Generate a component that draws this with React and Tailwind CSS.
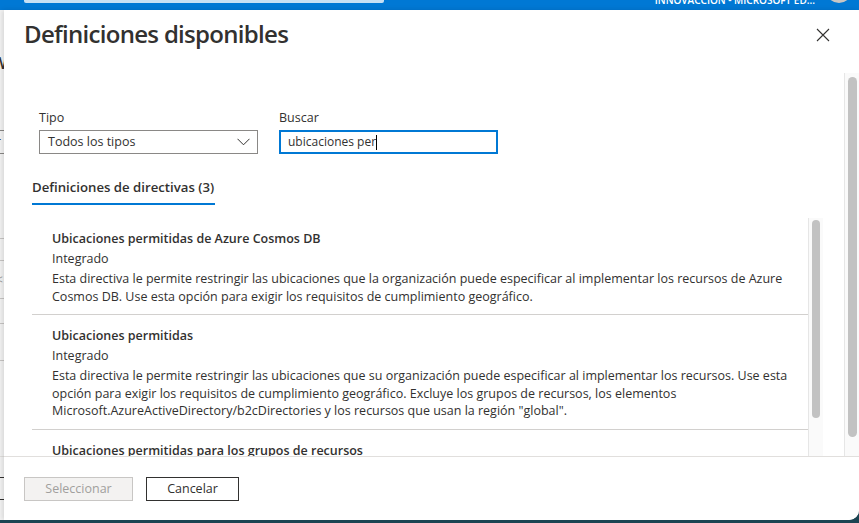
import React from "react";

const FONT = { fontFamily: '"Open Sans", "Noto Sans", sans-serif' };

const items = [
  {
    title: "Ubicaciones permitidas de Azure Cosmos DB",
    lines: [
      "Esta directiva le permite restringir las ubicaciones que la organización puede especificar al implementar los recursos de Azure",
      "Cosmos DB. Use esta opción para exigir los requisitos de cumplimiento geográfico.",
    ],
  },
  {
    title: "Ubicaciones permitidas",
    lines: [
      "Esta directiva le permite restringir las ubicaciones que su organización puede especificar al implementar los recursos. Use esta",
      "opción para exigir los requisitos de cumplimiento geográfico. Excluye los grupos de recursos, los elementos",
      'Microsoft.AzureActiveDirectory/b2cDirectories y los recursos que usan la región "global".',
    ],
  },
  {
    title: "Ubicaciones permitidas para los grupos de recursos",
    lines: [
      "Esta directiva le permite restringir las ubicaciones en las que la organización puede crear grupos de recursos. Use esta opción",
      "para exigir los requisitos de cumplimiento geográfico.",
    ],
  },
];

function Scrollbar({ thumbTop, thumbHeight, thumbWidth }) {
  return (
    <div className="w-[15px] shrink-0 border-l border-[#e6e6e6] bg-[#fafafa] flex justify-center">
      <div className="flex flex-col">
        <div style={{ height: thumbTop }} />
        <div
          className="rounded-full bg-[#c2c2c2]"
          style={{ height: thumbHeight, width: thumbWidth }}
        />
      </div>
    </div>
  );
}

export default function App() {
  return (
    <div className="w-[859px] h-[523px] flex flex-col overflow-hidden bg-[#1b4452]" style={FONT}>
      <div className="h-[520px] flex flex-col bg-white rounded-br-[10px] overflow-hidden">
        {/* top bar */}
        <div className="h-[10px] shrink-0 bg-[#0078d4] flex items-start overflow-hidden">
          <div className="ml-[24px] w-[360px] h-[3px] bg-[#c7e0f4] rounded-b-[2px]" />
          <div className="ml-auto -mt-[6px] text-[10px] leading-[12px] font-semibold text-white whitespace-nowrap">
            INNOVACCIÓN - MICROSOFT ED...
          </div>
          <div className="ml-[11px] mr-[7px] -mt-[23px] w-[26px] h-[26px] rounded-full bg-[#c8c6c4]" />
        </div>

        <div className="flex flex-1 min-h-0">
          {/* background page strip */}
          <div className="w-[4px] shrink-0 bg-[#f4f4f4] flex flex-col overflow-hidden text-[#323130]">
            <div className="h-[45px]" />
            <div className="text-[16px] leading-[16px] font-semibold -ml-[8px]">W</div>
            <div className="h-[59px]" />
            <div className="h-px bg-[#8a8886]" />
            <div className="text-[12px] leading-[22px] -ml-[4px]">r</div>
            <div className="h-px bg-[#8a8886]" />
            <div className="h-[84px]" />
            <div className="h-px bg-[#c8c6c4]" />
            <div className="h-[21px]" />
            <div className="h-px bg-[#c8c6c4]" />
            <div className="text-[12px] leading-[37px] -ml-[4px] text-[#a19f9d]">&lt;</div>
            <div className="h-px bg-[#c8c6c4]" />
            <div className="h-[24px]" />
            <div className="h-px bg-[#c8c6c4]" />
            <div className="h-[36px]" />
            <div className="h-px bg-[#c8c6c4]" />
            <div className="h-[95px]" />
            <div className="h-px bg-[#e1dfdd]" />
            <div className="h-[20px]" />
            <div className="h-[23px] border-y border-[#323130] text-[12px] leading-[21px] -ml-[4px]">(</div>
          </div>

          {/* panel */}
          <div className="flex-1 flex flex-col bg-white shadow-[-2px_0_5px_rgba(0,0,0,0.12)] text-[#323130]">
            {/* header */}
            <div className="h-[63px] shrink-0 flex items-start justify-between pl-[20px] pr-[29px] pt-[8px]">
              <h1 className="text-[24px] leading-[32px] font-semibold tracking-[-0.7px] text-[#323130]">
                Definiciones disponibles
              </h1>
              <svg width="14" height="14" viewBox="0 0 14 14" className="mt-[10px]">
                <path d="M1 1 L13 13 M13 1 L1 13" stroke="#323130" strokeWidth="1.1" fill="none" />
              </svg>
            </div>

            {/* body */}
            <div className="flex-1 min-h-0 flex">
              <div className="flex-1 min-w-0 flex flex-col pr-[21px]">
                {/* filters */}
                <div className="pt-[36px] pl-[35px] flex gap-[21px]">
                  <div className="w-[219px] flex flex-col">
                    <div className="text-[12.5px] leading-[18px]">Tipo</div>
                    <div className="mt-[3px] h-[24px] border border-[#8a8886] flex items-center justify-between pl-[8px] pr-[7px]">
                      <span className="text-[12.5px] leading-[16px]">Todos los tipos</span>
                      <svg width="13" height="8" viewBox="0 0 13 8">
                        <path d="M0.5 0.8 L6.5 6.8 L12.5 0.8" stroke="#323130" strokeWidth="1" fill="none" />
                      </svg>
                    </div>
                  </div>
                  <div className="w-[219px] flex flex-col">
                    <div className="text-[12.5px] leading-[18px]">Buscar</div>
                    <div className="mt-[3px] h-[24px] border-2 border-[#0078d4] flex items-center pl-[7px]">
                      <span className="text-[12px] leading-[16px]">ubicaciones per</span>
                      <span className="w-px h-[15px] bg-[#000]" />
                    </div>
                  </div>
                </div>

                {/* tab */}
                <div className="mt-[24px] pl-[28px] flex">
                  <div className="border-b-2 border-[#0078d4] pb-[7px] text-[13.2px] leading-[18px] font-semibold pr-[1px]">
                    Definiciones de directivas (3)
                  </div>
                </div>

                {/* list */}
                <div className="mt-[13px] ml-[28px] flex-1 min-h-0 flex">
                  <div className="flex-1 min-w-0 overflow-hidden">
                    {items.map((it, i) => (
                      <div key={i} className="border-b border-[#d2d0ce] pt-[12px] pb-[9px] pl-[20px]">
                        <div className="text-[12.5px] leading-[18px] font-semibold whitespace-nowrap">{it.title}</div>
                        <div className="mt-[2px] text-[12.5px] leading-[18px]">Integrado</div>
                        <div className="mt-[2px] text-[12.5px] leading-[17.5px]">
                          {it.lines.map((l, j) => (
                            <div key={j} className="whitespace-nowrap">{l}</div>
                          ))}
                        </div>
                      </div>
                    ))}
                  </div>
                  <Scrollbar thumbTop={2} thumbHeight={198} thumbWidth={8} />
                </div>
              </div>
              <Scrollbar thumbTop={4} thumbHeight={360} thumbWidth={9} />
            </div>

            {/* footer */}
            <div className="h-[64px] shrink-0 border-t border-[#e1dfdd] pl-[20px] pt-[20px] flex gap-[13px] items-start">
              <button className="w-[109px] h-[24px] border border-[#c8c6c4] bg-[#f3f2f1] text-[#a19f9d] text-[12.5px] leading-[16px]">
                Seleccionar
              </button>
              <button className="w-[93px] h-[24px] border border-[#323130] bg-white text-[#323130] text-[12.5px] leading-[16px]">
                Cancelar
              </button>
            </div>
          </div>
        </div>
      </div>
    </div>
  );
}
